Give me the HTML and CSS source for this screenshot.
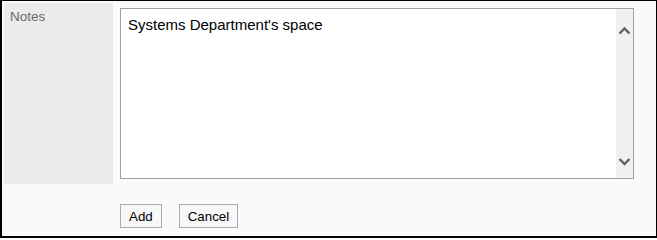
FILE: index.html
```html
<!DOCTYPE html>
<html lang="en">
<head>
<meta charset="utf-8">
<title>Notes</title>
<link rel="stylesheet" href="styles.css">
</head>
<body>
<div class="frame">
  <div class="row">
    <div class="label">Notes</div>
    <div class="field">
      <div class="textarea">
        <div class="text">Systems Department's space</div>
        <div class="scrollbar">
          <svg class="arrow" width="17" height="17" viewBox="0 0 17 17"><path d="M3.5 10.5 L8.5 5.5 L13.5 10.5" fill="none" stroke="#606060" stroke-width="2.4"/></svg>
          <svg class="arrow" width="17" height="17" viewBox="0 0 17 17"><path d="M3.5 6 L8.5 11 L13.5 6" fill="none" stroke="#606060" stroke-width="2.4"/></svg>
        </div>
      </div>
    </div>
  </div>
  <div class="actions">
    <button class="btn" type="button">Add</button>
    <button class="btn" type="button">Cancel</button>
  </div>
</div>
</body>
</html>
```

FILE: styles.css
```css
html, body {
  margin: 0;
  padding: 0;
  background: #ffffff;
}

.frame {
  box-sizing: border-box;
  width: 657px;
  height: 238px;
  border-style: solid;
  border-color: #000;
  border-width: 1px 1px 2px 2px;
  background: #fafafa;
  padding: 2px;
  font-family: "Liberation Sans", Arial, sans-serif;
}

.row {
  display: flex;
  height: 181px;
}

.label {
  box-sizing: border-box;
  width: 109px;
  background: #ebebeb;
  color: #6a6a6a;
  font-size: 13.5px;
  padding: 6px 6px;
}

.field {
  padding: 5px 0 0 7px;
}

.textarea {
  box-sizing: border-box;
  width: 514px;
  height: 171px;
  border: 1px solid #a0a0a0;
  background: #ffffff;
  display: flex;
}

.text {
  flex: 1;
  padding: 7px 7px;
  font-size: 15px;
  color: #000;
}

.scrollbar {
  width: 17px;
  background: #f0f0f0;
  display: flex;
  flex-direction: column;
  justify-content: space-between;
  padding: 14px 0 8px 0;
}

.arrow {
  display: block;
}

.actions {
  display: flex;
  gap: 17px;
  margin: 20px 0 0 116px;
}

.btn {
  box-sizing: border-box;
  height: 24px;
  padding: 0 8px;
  border: 1px solid #adadad;
  background: #f7f7f7;
  color: #000;
  font-family: "Liberation Sans", Arial, sans-serif;
  font-size: 13.333px;
  border-radius: 0;
}
```
